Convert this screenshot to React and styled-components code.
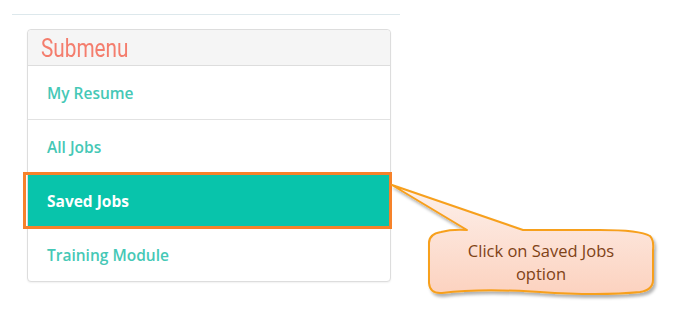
import React from 'react';
import styled, { createGlobalStyle } from 'styled-components';

const GlobalStyle = createGlobalStyle`
  html, body {
    margin: 0;
    padding: 0;
    background: #ffffff;
  }
  body {
    font-family: "Open Sans", "Liberation Sans", sans-serif;
  }
`;

const Page = styled.div`
  position: relative;
  width: 680px;
  height: 330px;
  padding-top: 14px;
  box-sizing: border-box;
  overflow: hidden;
`;

const Rule = styled.div`
  margin-left: 12px;
  width: 388px;
  height: 1px;
  background-color: #dde8ec;
`;

const Panel = styled.div`
  margin: 14px 0 0 27px;
  width: 364px;
  box-sizing: border-box;
  border: 1px solid #dddddd;
  border-radius: 4px;
  box-shadow: 0 1px 2px rgba(0, 0, 0, 0.06);
  background-color: #ffffff;
`;

const Header = styled.div`
  height: 35px;
  display: flex;
  align-items: center;
  padding-left: 13px;
  background-color: #f5f5f5;
  border-bottom: 1px solid #dddddd;
  border-radius: 4px 4px 0 0;
`;

const Title = styled.span`
  display: inline-block;
  font-family: Roboto, "DejaVu Sans", sans-serif;
  font-size: 25px;
  font-weight: 400;
  color: #f47d6d;
  transform: scaleX(0.83);
  transform-origin: left center;
  line-height: 1;
  margin-top: 2px;
`;

const Item = styled.div`
  position: relative;
  height: 53px;
  display: flex;
  align-items: center;
  padding-left: 19px;
  font-size: 15.5px;
  font-weight: ${(props) => (props.active ? 700 : 600)};
  color: ${(props) => (props.active ? '#ffffff' : '#45c8b6')};
  background-color: ${(props) => (props.active ? '#08c4ab' : 'transparent')};
  border-bottom: ${(props) => (props.last ? 'none' : '1px solid #e2e2e2')};
  border-radius: ${(props) => (props.last ? '0 0 4px 4px' : '0')};

  &::after {
    content: '';
    display: ${(props) => (props.active ? 'block' : 'none')};
    position: absolute;
    left: -5px;
    right: -2px;
    top: -2px;
    bottom: -2px;
    border: 3px solid #f6822a;
    pointer-events: none;
  }
`;

const Callout = styled.div`
  position: absolute;
  left: 380px;
  top: 170px;
  width: 290px;
  height: 135px;
`;

const CalloutText = styled.div`
  position: absolute;
  left: 49px;
  top: 60px;
  width: 224px;
  height: 64px;
  display: flex;
  align-items: center;
  justify-content: center;
  text-align: center;
  font-family: "Open Sans", "Liberation Sans", sans-serif;
  font-size: 16.5px;
  line-height: 23px;
  color: #7f4216;
`;

const items = ['My Resume', 'All Jobs', 'Saved Jobs', 'Training Module'];

const App = () => {
  return (
    <Page>
      <GlobalStyle />
      <Rule />
      <Panel>
        <Header>
          <Title>Submenu</Title>
        </Header>
        {items.map((label, i) => (
          <Item key={label} active={label === 'Saved Jobs'} last={i === items.length - 1}>
            {label}
          </Item>
        ))}
      </Panel>

      <Callout>
        <svg width="290" height="135" viewBox="0 0 290 135">
          <defs>
            <linearGradient id="bubbleFill" x1="0" y1="0" x2="0" y2="1">
              <stop offset="0" stopColor="#fdf1ec" />
              <stop offset="1" stopColor="#fcd2bf" />
            </linearGradient>
            <filter id="bubbleShadow" x="-10%" y="-10%" width="130%" height="140%">
              <feDropShadow dx="2" dy="3" stdDeviation="1.5" floodColor="#000000" floodOpacity="0.3" />
            </filter>
          </defs>
          <path
            d="M 61 62 Q 72 59 87 60 L 12 15 L 143 60 L 220 60 Q 260 60 270 66 Q 274 70 273 80 L 273 110 Q 273 120 260 122 Q 220 126 160 122 Q 100 118 62 123 Q 50 124 49 113 L 49 73 Q 49 64 61 62 Z"
            fill="url(#bubbleFill)"
            stroke="#f7a01e"
            strokeWidth="2"
            strokeLinejoin="round"
            filter="url(#bubbleShadow)"
          />
        </svg>
        <CalloutText>
          Click on Saved Jobs
          <br />
          option
        </CalloutText>
      </Callout>
    </Page>
  );
};

export default App;
